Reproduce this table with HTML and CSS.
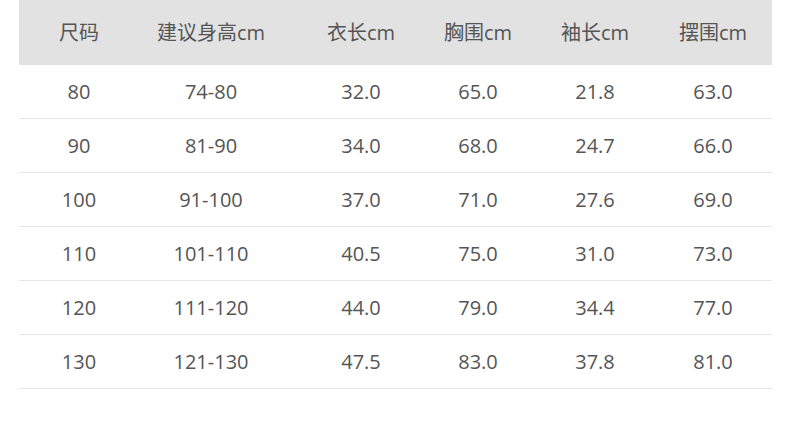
FILE: index.html
```html
<!DOCTYPE html>
<html lang="zh-CN">
<head>
<meta charset="utf-8">
<title>尺码表</title>
<link rel="stylesheet" href="styles.css">
</head>
<body>
<div class="size-table">
  <div class="row head">
    <div>尺码</div><div>建议身高cm</div><div>衣长cm</div><div>胸围cm</div><div>袖长cm</div><div>摆围cm</div>
  </div>
  <div class="row"><div>80</div><div>74-80</div><div>32.0</div><div>65.0</div><div>21.8</div><div>63.0</div></div>
  <div class="row"><div>90</div><div>81-90</div><div>34.0</div><div>68.0</div><div>24.7</div><div>66.0</div></div>
  <div class="row"><div>100</div><div>91-100</div><div>37.0</div><div>71.0</div><div>27.6</div><div>69.0</div></div>
  <div class="row"><div>110</div><div>101-110</div><div>40.5</div><div>75.0</div><div>31.0</div><div>73.0</div></div>
  <div class="row"><div>120</div><div>111-120</div><div>44.0</div><div>79.0</div><div>34.4</div><div>77.0</div></div>
  <div class="row"><div>130</div><div>121-130</div><div>47.5</div><div>83.0</div><div>37.8</div><div>81.0</div></div>
</div>
</body>
</html>
```

FILE: styles.css
```css
html, body {
  margin: 0;
  padding: 0;
  background: #ffffff;
}

body {
  font-family: "Open Sans", "Noto Sans CJK SC", sans-serif;
  font-size: 20px;
  color: #555555;
}

.size-table {
  margin-left: 19px;
  width: 753px;
}

.row {
  display: grid;
  grid-template-columns: 120px 144px 156px 78px 156px 80px 19px;
  align-items: center;
  height: 53px;
  border-bottom: 1px solid #e6e6e6;
  text-align: center;
  line-height: 1;
}

.row.head {
  height: 65px;
  background: #e2e2e2;
  border-bottom: none;
}
```
